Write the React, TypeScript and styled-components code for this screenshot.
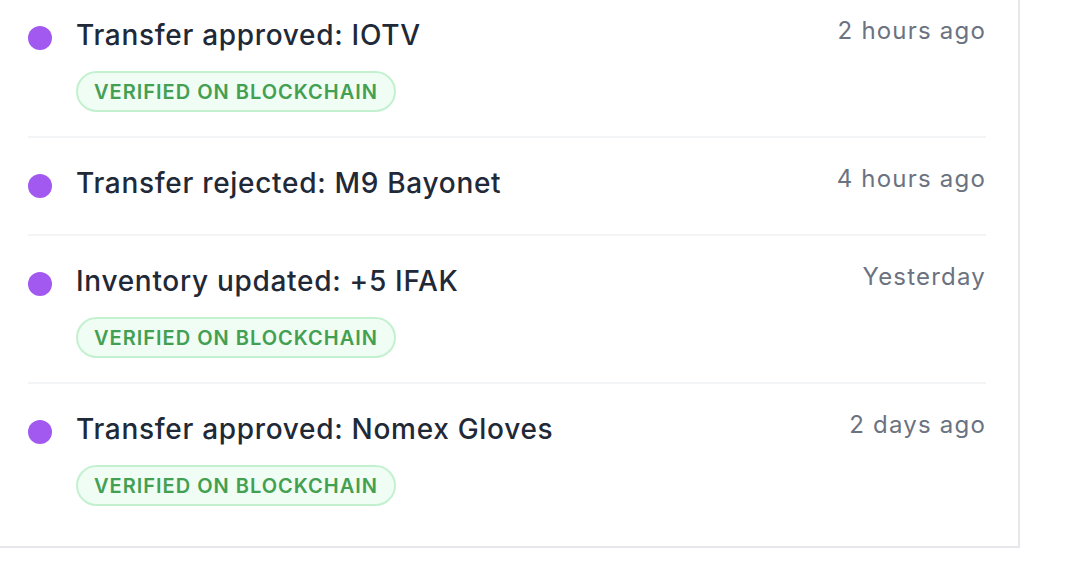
import React from "react";
import styled, { createGlobalStyle } from "styled-components";

const Global = createGlobalStyle`
  html, body { margin: 0; padding: 0; background: #ffffff; overflow: hidden; }
  body { font-family: Inter, "Noto Sans", sans-serif; -webkit-font-smoothing: antialiased; }
`;

const Card = styled.section`
  box-sizing: border-box;
  width: 1026px;
  margin: -28px 0 0 -6px;
  padding: 16px 32px;
  background: #fff;
  border: 2px solid #e5e7eb;
`;

const List = styled.ul`
  list-style: none;
  margin: 0;
  padding: 0;
`;

const Row = styled.li`
  display: flex;
  align-items: flex-start;
  gap: 24px;
  padding: 24px 0;
  border-bottom: 2px solid #f3f4f6;
  &:last-child { border-bottom: none; }
`;

const Dot = styled.span`
  flex: none;
  width: 24px;
  height: 24px;
  margin-top: 12px;
  border-radius: 50%;
  background: #a259ef;
`;

const Body = styled.div`
  flex: 1;
  display: flex;
  flex-direction: column;
  align-items: flex-start;
`;

const Title = styled.div`
  font-size: 28px;
  line-height: 42px;
  font-weight: 500;
  color: #1f2937;
  letter-spacing: 0.7px;
  margin-bottom: 6px;
`;

const Badge = styled.span`
  display: inline-flex;
  align-items: center;
  box-sizing: border-box;
  height: 41px;
  margin-top: 9px;
  padding: 0 16px;
  border: 2px solid #c3f1d0;
  border-radius: 999px;
  background: #f0fdf4;
  color: #43a052;
  font-size: 20px;
  font-weight: 600;
  letter-spacing: 1px;
  text-transform: uppercase;
`;

const Time = styled.span`
  flex: none;
  font-size: 24px;
  line-height: 32px;
  color: #6b7280;
  letter-spacing: 1.2px;
  margin-top: 1px;
`;

const items = [
  { title: "Transfer approved: IOTV", time: "2 hours ago", verified: true },
  { title: "Transfer rejected: M9 Bayonet", time: "4 hours ago", verified: false },
  { title: "Inventory updated: +5 IFAK", time: "Yesterday", verified: true },
  { title: "Transfer approved: Nomex Gloves", time: "2 days ago", verified: true },
];

export default function App() {
  return (
    <>
      <Global />
      <Card>
        <List>
          {items.map((it) => (
            <Row key={it.title}>
              <Dot />
              <Body>
                <Title>{it.title}</Title>
                {it.verified && <Badge>Verified on Blockchain</Badge>}
              </Body>
              <Time>{it.time}</Time>
            </Row>
          ))}
        </List>
      </Card>
    </>
  );
}
